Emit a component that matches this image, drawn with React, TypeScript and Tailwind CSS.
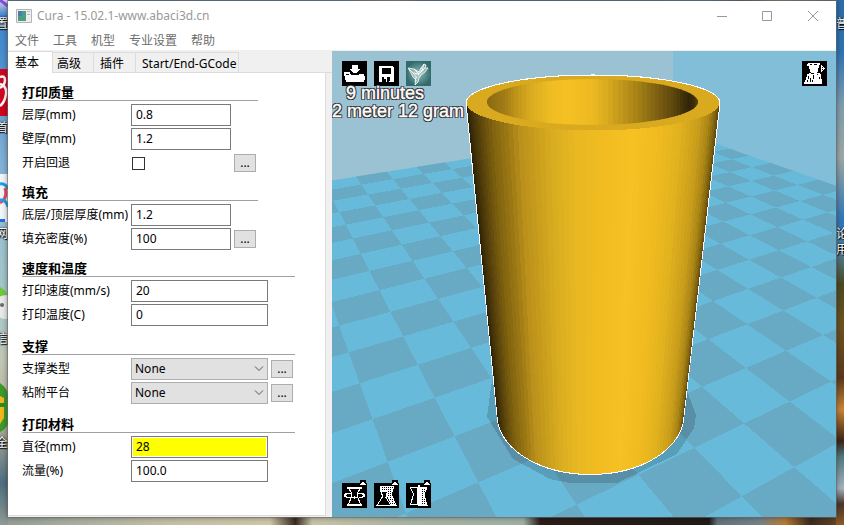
import type { ReactNode } from 'react';

type Point = [number, number];
type Stop = [number, string];

const menus = ['文件', '工具', '机型', '专业设置', '帮助'];

// ---------- 3d scene ----------

// projects a point of the platform grid onto the view
function project(u: number, v: number): Point {
  const w = 1 + 0.0584 * u - 0.1016 * v;
  return [(406 + 100.2 * u - 21.1 * v) / w, (513.3 - 2.72 * u + 4.45 * v) / w];
}

function toPoints(points: Point[]) {
  return points.map(([x, y]) => `${x.toFixed(1)},${y.toFixed(1)}`).join(' ');
}

function darkTiles() {
  const tiles: string[] = [];
  for (let u = -5; u < 16; u++) {
    for (let v = -14; v < 5; v++) {
      if ((u + v) % 2 !== 0) continue;
      tiles.push(toPoints([project(u, v), project(u + 1, v), project(u + 1, v + 1), project(u, v + 1)]));
    }
  }
  return tiles;
}

const outerShade: Stop[] = [
  [0, '#2b2005'],
  [0.02, '#403008'],
  [0.05, '#5a440c'],
  [0.1, '#80620f'],
  [0.16, '#9c7914'],
  [0.21, '#bb901b'],
  [0.27, '#c99e1d'],
  [0.34, '#d9ac20'],
  [0.43, '#e8b822'],
  [0.57, '#f2bd21'],
  [0.66, '#f5c123'],
  [0.76, '#f0bb20'],
  [0.84, '#e2b21e'],
  [0.92, '#c99d1b'],
  [0.96, '#a98516'],
  [0.985, '#80620f'],
  [1, '#5a440c'],
];

const innerShade: Stop[] = [
  [0, '#8a6a10'],
  [0.08, '#a07b15'],
  [0.14, '#c0951a'],
  [0.2, '#d8aa1f'],
  [0.3, '#eebb22'],
  [0.38, '#f5c123'],
  [0.49, '#edba21'],
  [0.57, '#d8aa1f'],
  [0.65, '#bd931a'],
  [0.74, '#9a7814'],
  [0.82, '#785c10'],
  [0.9, '#54400c'],
  [0.955, '#302408'],
  [0.98, '#3a2c08'],
  [1, '#5a450c'],
];

function shadeAt(stops: Stop[], t: number) {
  const i = Math.max(1, stops.findIndex(([at]) => at >= t));
  const [t0, c0] = stops[i - 1];
  const [t1, c1] = stops[i];
  const k = (t - t0) / (t1 - t0);
  const rgb = [1, 3, 5].map((p) => {
    const a = parseInt(c0.slice(p, p + 2), 16);
    const b = parseInt(c1.slice(p, p + 2), 16);
    return Math.round(a + (b - a) * k);
  });
  return `rgb(${rgb.join(',')})`;
}

const FACETS = 64;

function cupFacets() {
  return Array.from({ length: FACETS }, (_, i) => {
    const a = (Math.PI * i) / FACETS;
    const b = (Math.PI * (i + 1)) / FACETS;
    const top = (r: number): Point => [593 - 126.5 * Math.cos(r), 103 + 26 * Math.sin(r)];
    const bottom = (r: number): Point => [590.5 - 93 * Math.cos(r), 415 + 59 * Math.sin(r)];
    return {
      points: toPoints([top(a), top(b), bottom(b), bottom(a)]),
      fill: shadeAt(outerShade, (1 - Math.cos((a + b) / 2)) / 2),
    };
  });
}

function Scene() {
  return (
    <svg
      className="absolute inset-0 h-full w-full"
      viewBox="332 51 504 466"
      preserveAspectRatio="xMidYMid slice"
      shapeRendering="crispEdges"
      aria-hidden="true"
    >
      <defs>
        <clipPath id="platform">
          <path d="M332 180.500L673 126L718 144L740 152.500L824 181.500L900 208V600H332z" />
        </clipPath>
        <clipPath id="hollow">
          <ellipse cx="592.500" cy="102" rx="105.500" ry="23" />
        </clipPath>
      </defs>
      <path d="M232 0h441v600H232z" fill="#9bc2d3" />
      <path d="M673 0h263v600H673z" fill="#82bed7" />
      <g clipPath="url(#platform)">
        <path d="M232 0h704v600H232z" fill="#68bada" />
        {darkTiles().map((points) => (
          <polygon key={points} points={points} fill="#68a9c3" />
        ))}
      </g>
      <path
        d="M492 380L487 417L513 459L550 479L572 483.500L618 482.500L640 472L677 454L694 428L696 415L687 391z"
        fill="#000"
        opacity="0.15"
      />
      <path
        d="M466.500 103A126.500 27.500 0 0 1 719.500 103L683.500 415A93 59 0 0 1 497.500 415z"
        fill="#d9aa20"
        stroke="#fff"
        strokeWidth="2"
      />
      {cupFacets().map((facet) => (
        <polygon key={facet.points} points={facet.points} fill={facet.fill} />
      ))}
      <ellipse cx="593" cy="103" rx="126.500" ry="27.500" fill="#d9aa20" />
      <g clipPath="url(#hollow)">
        {Array.from({ length: FACETS }, (_, i) => {
          const x0 = 592.5 - 105.5 * Math.cos((Math.PI * i) / FACETS);
          const x1 = 592.5 - 105.5 * Math.cos((Math.PI * (i + 1)) / FACETS);
          return (
            <rect key={i} x={x0} y="78" width={x1 - x0 + 0.5} height="48" fill={shadeAt(innerShade, ((x0 + x1) / 2 - 487) / 211)} />
          );
        })}
      </g>
    </svg>
  );
}

// ---------- view buttons ----------

function ViewButton({ label, tab, children }: { label: string; tab?: boolean; children: ReactNode }) {
  return (
    <button type="button" aria-label={label} title={label} className="block h-[25px] w-[25px]">
      <svg viewBox="0 0 25 25" className="block h-full w-full overflow-visible" shapeRendering="crispEdges">
        <path d="M0 0h25v25H0z" fill="#000" />
        {tab && (
          <>
            <path d="M18-3h6v3h-6z" fill="#000" />
            <path d="M18 2v-1h1v-1h1v-1h2v1h1v1h1v1z" fill="#fff" />
          </>
        )}
        {children}
      </svg>
    </button>
  );
}

function LoadIcon() {
  return (
    <>
      <path d="M10 4h6v4h2v1h-1v1h-1v1h-1v1h-4v-1h-1v-1H9V9H8V8h2z" fill="#fff" />
      <path d="M2 11h6v2h1v1h8v-1h5v2h1v4h-1v2H4v-2H3v-4H2z" fill="#fff" />
      <path d="M4 13h3v1H4zM9 11h1v1H9z" fill="#000" />
    </>
  );
}

function SaveIcon() {
  return (
    <>
      <path d="M5 5h14v1h1v15H5z" fill="#fff" />
      <path d="M8 7h9v6H8zM8 16h9v5H8z" fill="#000" />
      <path d="M10 16h3v5h-1v-3h-2zM16 16h1v5h-2v-1h1z" fill="#fff" />
    </>
  );
}

function PatternMesh({ id }: { id: string }) {
  return (
    <defs>
      <pattern id={id} width="2" height="2" patternUnits="userSpaceOnUse">
        <path d="M0 0h2v2H0z" fill="#fff" />
        <path d="M0 0h1v1H0z" fill="#000" />
      </pattern>
    </defs>
  );
}

function YouMagineIcon() {
  return (
    <>
      <defs>
        <radialGradient id="teal">
          <stop offset="0" stopColor="#8fb9b4" />
          <stop offset="0.600" stopColor="#578c8b" />
          <stop offset="1" stopColor="#336b6c" />
        </radialGradient>
      </defs>
      <path d="M0 0h25v25H0z" fill="url(#teal)" />
      <g fill="none" stroke="#fff" strokeWidth="0.800" shapeRendering="auto">
        <path d="M2 7l6 1 5 3 2-4 3-4 2 1-1 3 3 0-3 4-4 3-2 3-1 4-3 3 1-5-3-3-2-4z" fill="#fff" fillOpacity="0.350" />
        <path d="M3 8l4 4 6 1M8 8l5 5M10 16l-1 5M12 14l4-5M15 7l3 2M18 3l-2 7M7 12l4 5M19 7l-5 5" />
      </g>
    </>
  );
}

function ViewModeIcon() {
  return (
    <>
      <path d="M5 3h1V2h12v2h-1v3h-1v4h-1v1H9v-1H8V8H7V5H5z" fill="#fff" />
      <path d="M7 12h2v1h3v-1h6v1h1v5h1v5H2v-2h1v-2h1v-3h1v-3h2z" fill="#fff" />
      <path d="M8 3h2v1H8zM12 3h3v1h-3zM6 15h1v3H6zM5 19h1v2H5zM8 17h1v4H8zM11 14h1v4h-1zM10 19h1v2h-1zM15 13h1v1h-1zM17 16h1v2h-1z" fill="#000" />
      <path d="M19 4h1v1h1v1h1v1h1v1h-1v1h-1v1h-1v1h-1z" fill="#fff" />
      <path d="M20 6h1v1h-1zM20 8h1v1h-1z" fill="#000" />
    </>
  );
}

function RotateIcon() {
  return (
    <g fill="none" stroke="#fff">
      <path d="M5 4.500h15M5 21.500h15" strokeWidth="2" />
      <path d="M6.500 5l3 5v4l-3 7M18.500 5l-3 5v4l3 7" />
      <path d="M9 10.500H5l-2 1v2l3 1h4M16 10.500h4l2 1v2l-3 1h-2M10 14.500h6M12.500 13v3" strokeWidth="1.500" />
    </g>
  );
}

function ScaleIcon() {
  return (
    <>
      <PatternMesh id="mesh-scale" />
      <path d="M6 3h13v3l-2 5 5 11h-4l-5-10 1-5H6z" fill="url(#mesh-scale)" stroke="#fff" />
      <path d="M7 8.500h6v2l-1 4 5 8H3l5-8v-3z" fill="#000" stroke="#fff" />
      <path d="M2 22h19v1H2z" fill="#fff" />
    </>
  );
}

function MirrorIcon() {
  return (
    <>
      <PatternMesh id="mesh-mirror" />
      <path d="M11.500 4.500h-7l3 7-3 10h7z" fill="#000" stroke="#fff" />
      <path d="M14 4h7l-3 8 3 10h-7z" fill="url(#mesh-mirror)" stroke="#fff" />
      <path d="M12 2h2v21h-2z" fill="#fff" />
    </>
  );
}

// ---------- settings form ----------

function Section({ title, wide, children }: { title: string; wide?: boolean; children: ReactNode }) {
  return (
    <section className={wide ? 'w-[273px]' : 'w-[236px]'}>
      <h2 className="mb-0.5 h-[17px] border-b border-[#a0a0a0] text-[13px] leading-4 font-bold">{title}</h2>
      {children}
    </section>
  );
}

function MoreButton({ label }: { label: string }) {
  return (
    <button
      type="button"
      aria-label={label}
      className="ml-[3px] h-[18px] w-[22px] border border-[#adadad] bg-[#e1e1e1] text-center text-xs leading-3"
    >
      ...
    </button>
  );
}

function Row({ id, label, more, children }: { id: string; label: string; more?: boolean; children: ReactNode }) {
  return (
    <div className="flex h-6 items-center">
      <label htmlFor={id} className="w-[109px] shrink-0 whitespace-nowrap">
        {label}
      </label>
      {children}
      {more && <MoreButton label={`${label} ...`} />}
    </div>
  );
}

function TextRow({ id, label, value, wide, more, warn }: { id: string; label: string; value: string; wide?: boolean; more?: boolean; warn?: boolean }) {
  return (
    <Row id={id} label={label} more={more}>
      <span className={`h-[22px] shrink-0 border border-[#7a7a7a] bg-white p-px ${wide ? 'w-[137px]' : 'w-[100px]'}`}>
        <input
          id={id}
          type="text"
          defaultValue={value}
          className={`block h-[18px] w-full px-[3px] pb-0.5 leading-4 outline-none ${warn ? 'bg-[#ffff00]' : 'bg-white'}`}
        />
      </span>
    </Row>
  );
}

function SelectRow({ id, label }: { id: string; label: string }) {
  return (
    <Row id={id} label={label} more>
      <span className="relative h-[22px] w-[137px] shrink-0">
        <select id={id} className="h-full w-full appearance-none border border-[#adadad] bg-[#e1e1e1] px-[3px] outline-none">
          <option>None</option>
        </select>
        <svg viewBox="0 0 10 6" className="pointer-events-none absolute top-2 right-1 h-1.5 w-2.5" fill="none" stroke="#555">
          <path d="M1 0.500l4 4 4-4" />
        </svg>
      </span>
    </Row>
  );
}

function SettingsPanel() {
  return (
    <div className="mb-px flex w-[318px] grow flex-col gap-[11px] border-r border-b border-[#dcdcdc] bg-white pt-[11px] pl-3.5">
      <div className="flex flex-col gap-[9px]">
        <Section title="打印质量">
          <TextRow id="layer" label="层厚(mm)" value="0.8" />
          <TextRow id="wall" label="壁厚(mm)" value="1.2" />
          <Row id="retract" label="开启回退" more>
            <span className="flex w-[100px] items-center pl-px">
              <input id="retract" type="checkbox" className="h-[13px] w-[13px] appearance-none border border-[#333] bg-white" />
            </span>
          </Row>
        </Section>
        <Section title="填充">
          <TextRow id="shell" label="底层/顶层厚度(mm)" value="1.2" />
          <TextRow id="density" label="填充密度(%)" value="100" more />
        </Section>
        <Section title="速度和温度" wide>
          <TextRow id="speed" label="打印速度(mm/s)" value="20" wide />
          <TextRow id="temperature" label="打印温度(C)" value="0" wide />
        </Section>
      </div>
      <Section title="支撑" wide>
        <SelectRow id="support" label="支撑类型" />
        <SelectRow id="adhesion" label="粘附平台" />
      </Section>
      <Section title="打印材料" wide>
        <TextRow id="diameter" label="直径(mm)" value="28" wide warn />
        <TextRow id="flow" label="流量(%)" value="100.0" wide />
      </Section>
    </div>
  );
}

function Tabs() {
  const rest = [
    { name: '高级', className: 'w-[41px] pl-1' },
    { name: '插件', className: 'w-[42px] pl-1.5' },
    { name: 'Start/End-GCode', className: 'w-[103px] pl-1.5' },
  ];
  return (
    <div role="tablist" className="flex items-end border-b border-[#dcdcdc]">
      <button type="button" role="tab" aria-selected="true" className="-mb-px h-[22px] w-[45px] border-t border-r border-[#dcdcdc] bg-white pl-[7px] text-left">
        基本
      </button>
      {rest.map((tab) => (
        <button
          key={tab.name}
          type="button"
          role="tab"
          aria-selected="false"
          className={`h-5 border-t border-r border-[#dcdcdc] bg-[#f0f0f0] pt-0.5 text-left leading-4 whitespace-nowrap ${tab.className}`}
        >
          {tab.name}
        </button>
      ))}
    </div>
  );
}

// ---------- desktop behind the window ----------

function Desktop() {
  return (
    <div className="absolute inset-0 overflow-hidden text-xs text-white [text-shadow:1px_1px_1px_#000,0_0_2px_#000]">
      <div className="absolute inset-x-0 bottom-0 h-3 bg-[linear-gradient(90deg,#8f9c94_0%,#a9aea0_8%,#c4bfa6_20%,#cfc7a8_32%,#3a2a20_35%,#c8c3a8_37%,#a9b5a4_48%,#9fb1a6_62%,#2b1e18_64%,#211b19_84%,#64747c_85%,#75828a_90%,#b87a32_93%,#3a2a22_96%,#6d4a2a_100%)]" />
      <div className="absolute inset-x-0 top-0 h-2 bg-[linear-gradient(90deg,#3d6fa8_0%,#3f76b5_40%,#9b8a63_47%,#2f5f93_50%,#3b6fa6_84%,#2a4258_88%,#9b8a63_92%,#2f5f93_100%)]" />
      <div className="absolute inset-y-0 left-0 w-2 bg-[linear-gradient(180deg,#d9d3ee_0%,#3f85cc_3%,#4a8ed0_10%,#7fb0d8_30%,#9cc3cf_45%,#a9c9c8_60%,#c2c8b8_68%,#b9b29b_80%,#4f6f82_92%,#8f9b93_100%)]" />
      <div className="absolute inset-y-0 right-0 w-2 bg-[linear-gradient(180deg,#2c6cab_0%,#2f74b4_10%,#7f9db0_20%,#9da8a5_30%,#2f77b8_42%,#4f7f9a_48%,#4b4a22_54%,#6b5320_62%,#5b3a1c_72%,#c98634_78%,#3a2418_84%,#4f7a80_87%,#a5b3bf_93%,#4a382c_96%,#8a5a26_100%)]" />
      <svg viewBox="0 0 8 525" className="absolute top-0 left-0 h-[525px] w-2">
        <path d="M0 0l8 6" stroke="#8a4be0" strokeWidth="3" />
        <path d="M0 69h8v47H0z" fill="#d0061f" />
        <path d="M0 77q5-2 5 3t-5 8M0 84q7 2 6 10t-6 12" fill="none" stroke="#fff" strokeWidth="2.500" />
        <path d="M0 174h8v48H0z" fill="#f4f7fa" />
        <path d="M0 184q5-1 8 5" fill="none" stroke="#1aa0e8" strokeWidth="3" />
        <path d="M5 188q3 10-5 15" fill="none" stroke="#ef4a6b" strokeWidth="3" />
        <path d="M0 200q6-1 8 7" fill="none" stroke="#1aa0e8" strokeWidth="3" />
        <path d="M0 219h5v3H0z" fill="#1c72e8" />
        <path d="M0 287q5 2 8 10H0z" fill="#6fc93a" />
        <circle cx="6" cy="307" r="12" fill="#e8ebe8" />
        <circle cx="2" cy="305" r="2" fill="#6a6a6a" />
        <path d="M0 383q8 6 8 12v29q-3 6-8 8z" fill="#3d9a2c" />
        <path d="M0 396l4 2v20l-4 6z" fill="#f2b81c" />
        <path d="M0 403h5v4H0z" fill="#2f8a25" />
      </svg>
      <span className="absolute top-4 -left-1">置</span>
      <span className="absolute top-30 -left-1">首</span>
      <span className="absolute top-[226px] -left-1">网</span>
      <span className="absolute top-[331px] -left-1">信</span>
      <span className="absolute top-[435px] -left-1">全</span>
      <span className="absolute top-4 -right-1">普</span>
      <span className="absolute top-[226px] -right-1">论</span>
      <span className="absolute top-[242px] -right-1">用</span>
    </div>
  );
}

function TitleBar() {
  return (
    <header className="flex h-[29px] items-center pl-2 text-[#999]">
      <svg viewBox="0 0 16 14" className="mr-[5px] h-3.5 w-4">
        <path d="M0.500 0.500h15v13H0.500z" fill="#eee" stroke="#b5b5b5" />
        <path d="M2 2h8v10H2z" fill="#4f9b86" />
        <path d="M2 2h4v5H2z" fill="#4a7fa8" />
        <path d="M11 2h3v1h-3zM11 5h3v1h-3z" fill="#bbb" />
      </svg>
      <h1 className="grow">Cura - 15.02.1-www.abaci3d.cn</h1>
      <div className="flex">
        <button type="button" aria-label="Minimize" className="flex h-7 w-[45px] items-center justify-center">
          <svg viewBox="0 0 12 12" className="h-3 w-3" stroke="#999" fill="none">
            <path d="M1 6.500h10" />
          </svg>
        </button>
        <button type="button" aria-label="Maximize" className="flex h-7 w-[45px] items-center justify-center">
          <svg viewBox="0 0 12 12" className="h-3 w-3" stroke="#999" fill="none">
            <path d="M1.500 1.500h9v9h-9z" />
          </svg>
        </button>
        <button type="button" aria-label="Close" className="flex h-7 w-[47px] items-center justify-center">
          <svg viewBox="0 0 12 12" className="h-3 w-3" stroke="#999" fill="none">
            <path d="M1 1l10 10M11 1L1 11" />
          </svg>
        </button>
      </div>
    </header>
  );
}

export default function App() {
  return (
    <div className="relative flex min-h-screen bg-[#8fb3c4] px-2 pt-px pb-2 font-['Noto_Sans','Noto_Sans_CJK_SC',sans-serif] text-xs text-black">
      <Desktop />
      <div className="relative flex grow flex-col bg-white shadow-[0_0_0_1px_rgba(110,110,110,0.6),0_0_6px_rgba(0,0,0,0.5)]">
        <TitleBar />
        <nav className="flex h-5 items-center gap-3.5 pt-0.5 pl-[7px] text-[#6d6d6d]">
          {menus.map((menu) => (
            <button key={menu} type="button">
              {menu}
            </button>
          ))}
        </nav>
        <main className="flex grow bg-[#f0f0f0] pt-px">
          <div className="flex w-[324px] shrink-0 flex-col">
            <Tabs />
            <SettingsPanel />
          </div>
          <div className="relative flex grow flex-col justify-between overflow-hidden">
            <Scene />
            <div className="relative flex items-start justify-between pt-2.5 pr-[9px]">
              <div>
                <div className="flex gap-[7px] pl-2.5">
                  <ViewButton label="Load">
                    <LoadIcon />
                  </ViewButton>
                  <ViewButton label="Save">
                    <SaveIcon />
                  </ViewButton>
                  <ViewButton label="Share">
                    <YouMagineIcon />
                  </ViewButton>
                </div>
                <div className="-mt-0.5 font-['Liberation_Sans',sans-serif] text-lg leading-[18px] whitespace-nowrap text-white [text-shadow:1px_0_#333,-1px_0_#333,0_1px_#333,0_-1px_#333,1px_1px_#333,-1px_-1px_#333,1px_-1px_#333,-1px_1px_#333] [-webkit-text-stroke:0.4px_#fff]">
                  <p className="pl-3.5">9 minutes</p>
                  <p>2 meter 12 gram</p>
                </div>
              </div>
              <ViewButton label="View mode">
                <ViewModeIcon />
              </ViewButton>
            </div>
            <div className="relative flex gap-[7px] pb-[9px] pl-2.5">
              <ViewButton label="Rotate" tab>
                <RotateIcon />
              </ViewButton>
              <ViewButton label="Scale" tab>
                <ScaleIcon />
              </ViewButton>
              <ViewButton label="Mirror" tab>
                <MirrorIcon />
              </ViewButton>
            </div>
          </div>
        </main>
      </div>
    </div>
  );
}
